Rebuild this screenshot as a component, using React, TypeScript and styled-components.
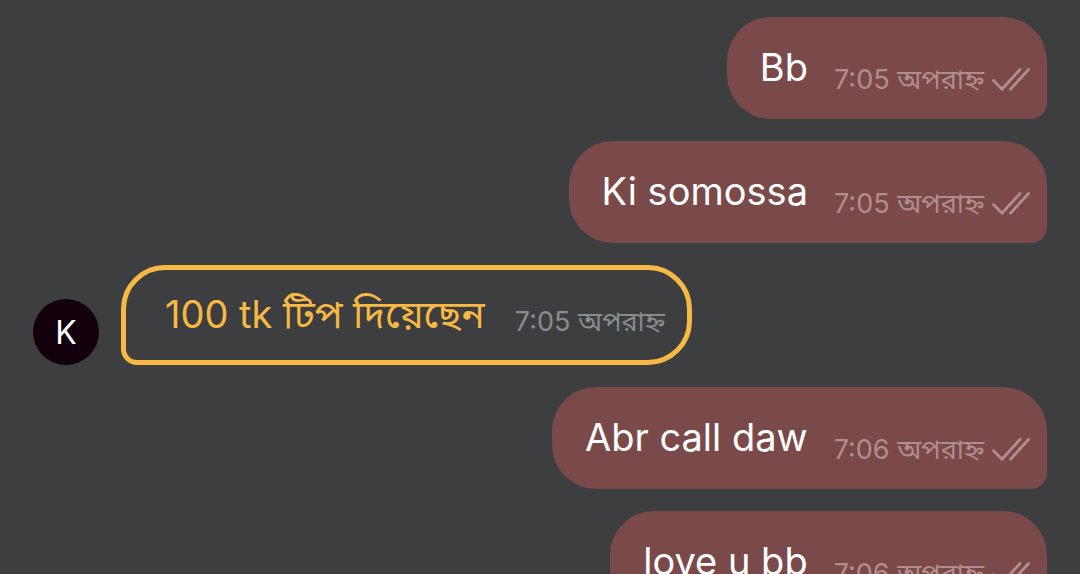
import React from "react";
import styled, { createGlobalStyle } from "styled-components";

const Global = createGlobalStyle`
  * { box-sizing: border-box; }
  body { margin: 0; background: #3d3e40; font-family: Inter, "Noto Sans Bengali", "Noto Sans", sans-serif; overflow: hidden; }
`;

const Thread = styled.main`
  display: flex;
  flex-direction: column;
  gap: 22px;
  height: 100vh;
  overflow: hidden;
  padding: 17px 33px 0;
`;

const Row = styled.div<{ $sent?: boolean }>`
  display: flex;
  flex-shrink: 0;
  align-items: flex-end;
  gap: 22px;
  justify-content: ${(p) => (p.$sent ? "flex-end" : "flex-start")};
`;

const SentBubble = styled.div`
  display: flex;
  align-items: flex-start;
  gap: 26px;
  padding: 26px 17px 24px 33px;
  border-radius: 44px 44px 16px 44px;
  background: #7a494a;
`;

const TipBubble = styled.div`
  display: flex;
  align-items: flex-start;
  gap: 30px;
  padding: 20px 22px 22px 39px;
  border: 5px solid #f7b944;
  border-radius: 44px 44px 44px 16px;
`;

const Text = styled.span<{ $tip?: boolean }>`
  font-size: 38px;
  line-height: 48px;
  white-space: nowrap;
  color: ${(p) => (p.$tip ? "#f7b944" : "#ffffff")};
`;

const Meta = styled.span<{ $tip?: boolean }>`
  display: flex;
  align-items: center;
  gap: 8px;
  padding-top: ${(p) => (p.$tip ? 17 : 22)}px;
  font-size: 27px;
  line-height: 30px;
  white-space: nowrap;
  color: ${(p) => (p.$tip ? "#8b8b8c" : "#b38c8d")};
`;

const Bangla = styled.span<{ $large?: boolean }>`
  font-size: ${(p) => (p.$large ? "39px" : "inherit")};
  font-weight: 450;
`;

const Avatar = styled.div`
  display: flex;
  align-items: center;
  justify-content: center;
  width: 66px;
  height: 66px;
  border-radius: 50%;
  background: #13000d;
  color: #ffffff;
  font-size: 32px;
`;

const Ticks = () => (
  <svg width="38" height="24" viewBox="0 0 38 24" fill="none" stroke="currentColor" strokeWidth="2.8" strokeLinecap="round" role="img" aria-label="Read">
    <path d="M1.5 12.5l8.5 8.7L28 1.5M18.5 21.2L36.5 1.5" />
  </svg>
);

const Time = ({ value }: { value: string }) => (
  <time>
    {value} <Bangla lang="bn">অপরাহ্ন</Bangla>
  </time>
);

const Sent = ({ text, time }: { text: string; time: string }) => (
  <Row $sent>
    <SentBubble>
      <Text>{text}</Text>
      <Meta>
        <Time value={time} />
        <Ticks />
      </Meta>
    </SentBubble>
  </Row>
);

export default function App() {
  return (
    <>
      <Global />
      <Thread>
        <Sent text="Bb" time="7:05" />
        <Sent text="Ki somossa" time="7:05" />
        <Row>
          <Avatar>K</Avatar>
          <TipBubble>
            <Text $tip>
              100 tk <Bangla $large lang="bn">টিপ দিয়েছেন</Bangla>
            </Text>
            <Meta $tip>
              <Time value="7:05" />
            </Meta>
          </TipBubble>
        </Row>
        <Sent text="Abr call daw" time="7:06" />
        <Sent text="love u bb" time="7:06" />
      </Thread>
    </>
  );
}
